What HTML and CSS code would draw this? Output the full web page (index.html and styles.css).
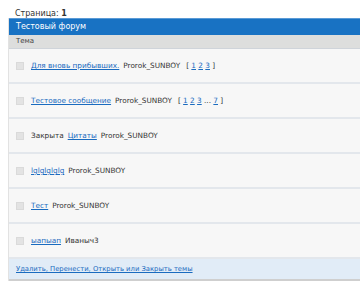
FILE: index.html
```html
<!DOCTYPE html>
<html lang="ru">
<head>
  <meta charset="UTF-8">
  <title>Тестовый форум</title>
  <link rel="stylesheet" href="styles.css">
</head>
<body>
  <div class="pager">Страница: <b>1</b></div>

  <div class="forum">
    <div class="forum-title">Тестовый форум</div>
    <div class="forum-head">Тема</div>

    <div class="topic">
      <span class="check"></span>
      <a href="#">Для вновь прибывших.</a>
      <span class="author">Prorok_SUNBOY</span>
      <span class="pages">[ <a href="#">1</a> <a href="#">2</a> <a href="#">3</a> ]</span>
    </div>
    <div class="topic">
      <span class="check"></span>
      <a href="#">Тестовое сообщение</a>
      <span class="author">Prorok_SUNBOY</span>
      <span class="pages">[ <a href="#">1</a> <a href="#">2</a> <a href="#">3</a> ... <a href="#">7</a> ]</span>
    </div>
    <div class="topic">
      <span class="check"></span>
      <span class="closed">Закрыта</span>
      <a href="#">Цитаты</a>
      <span class="author">Prorok_SUNBOY</span>
    </div>
    <div class="topic">
      <span class="check"></span>
      <a href="#">lglglglglg</a>
      <span class="author">Prorok_SUNBOY</span>
    </div>
    <div class="topic">
      <span class="check"></span>
      <a href="#">Тест</a>
      <span class="author">Prorok_SUNBOY</span>
    </div>
    <div class="topic">
      <span class="check"></span>
      <a href="#">ыапыап</a>
      <span class="author">Иваныч3</span>
    </div>

    <div class="forum-foot">
      <a href="#">Удалить, Перенести, Открыть или Закрыть темы</a>
    </div>
  </div>
</body>
</html>
```

FILE: styles.css
```css
body {
  font-family: "DejaVu Sans", Verdana, sans-serif;
  font-size: 7.3px;
  color: #333;
  margin: 0;
  padding: 0;
  background: #fff;
}

a {
  color: #1a6bbf;
}

.pager {
  padding: 9px 0 0 15px;
  height: 9px;
  font-size: 8px;
}

.forum {
  margin-left: 8px;
  border-left: 1px solid #e2e2e2;
}

.forum-title {
  background-color: #1872c3;
  border-top: 1px solid #5a9ad6;
  color: #fff;
  height: 16px;
  line-height: 16px;
  padding-left: 7px;
  font-size: 8px;
}

.forum-head {
  background-color: #dddedd;
  border-bottom: 1px solid #cfd4da;
  height: 13px;
  line-height: 13px;
  padding-left: 7px;
  font-size: 7px;
  color: #444;
}

.topic {
  display: flex;
  align-items: center;
  gap: 4px;
  height: 33px;
  padding-left: 7px;
  background-color: #f7f7f7;
  border-bottom: 2px solid #e3e7ec;
}

.topic:last-of-type {
  border-bottom: 2px solid #cfcfcf;
}

.check {
  width: 6px;
  height: 6px;
  background-color: #e3e3e3;
  border: 1px solid #dadada;
  margin-right: 3px;
}

.pages {
  margin-left: 2px;
}

.forum-foot {
  background-color: #e1ecf7;
  border-bottom: 2px solid #cfcfcf;
  height: 20px;
  line-height: 20px;
  padding-left: 7px;
  font-size: 6.8px;
}
```
